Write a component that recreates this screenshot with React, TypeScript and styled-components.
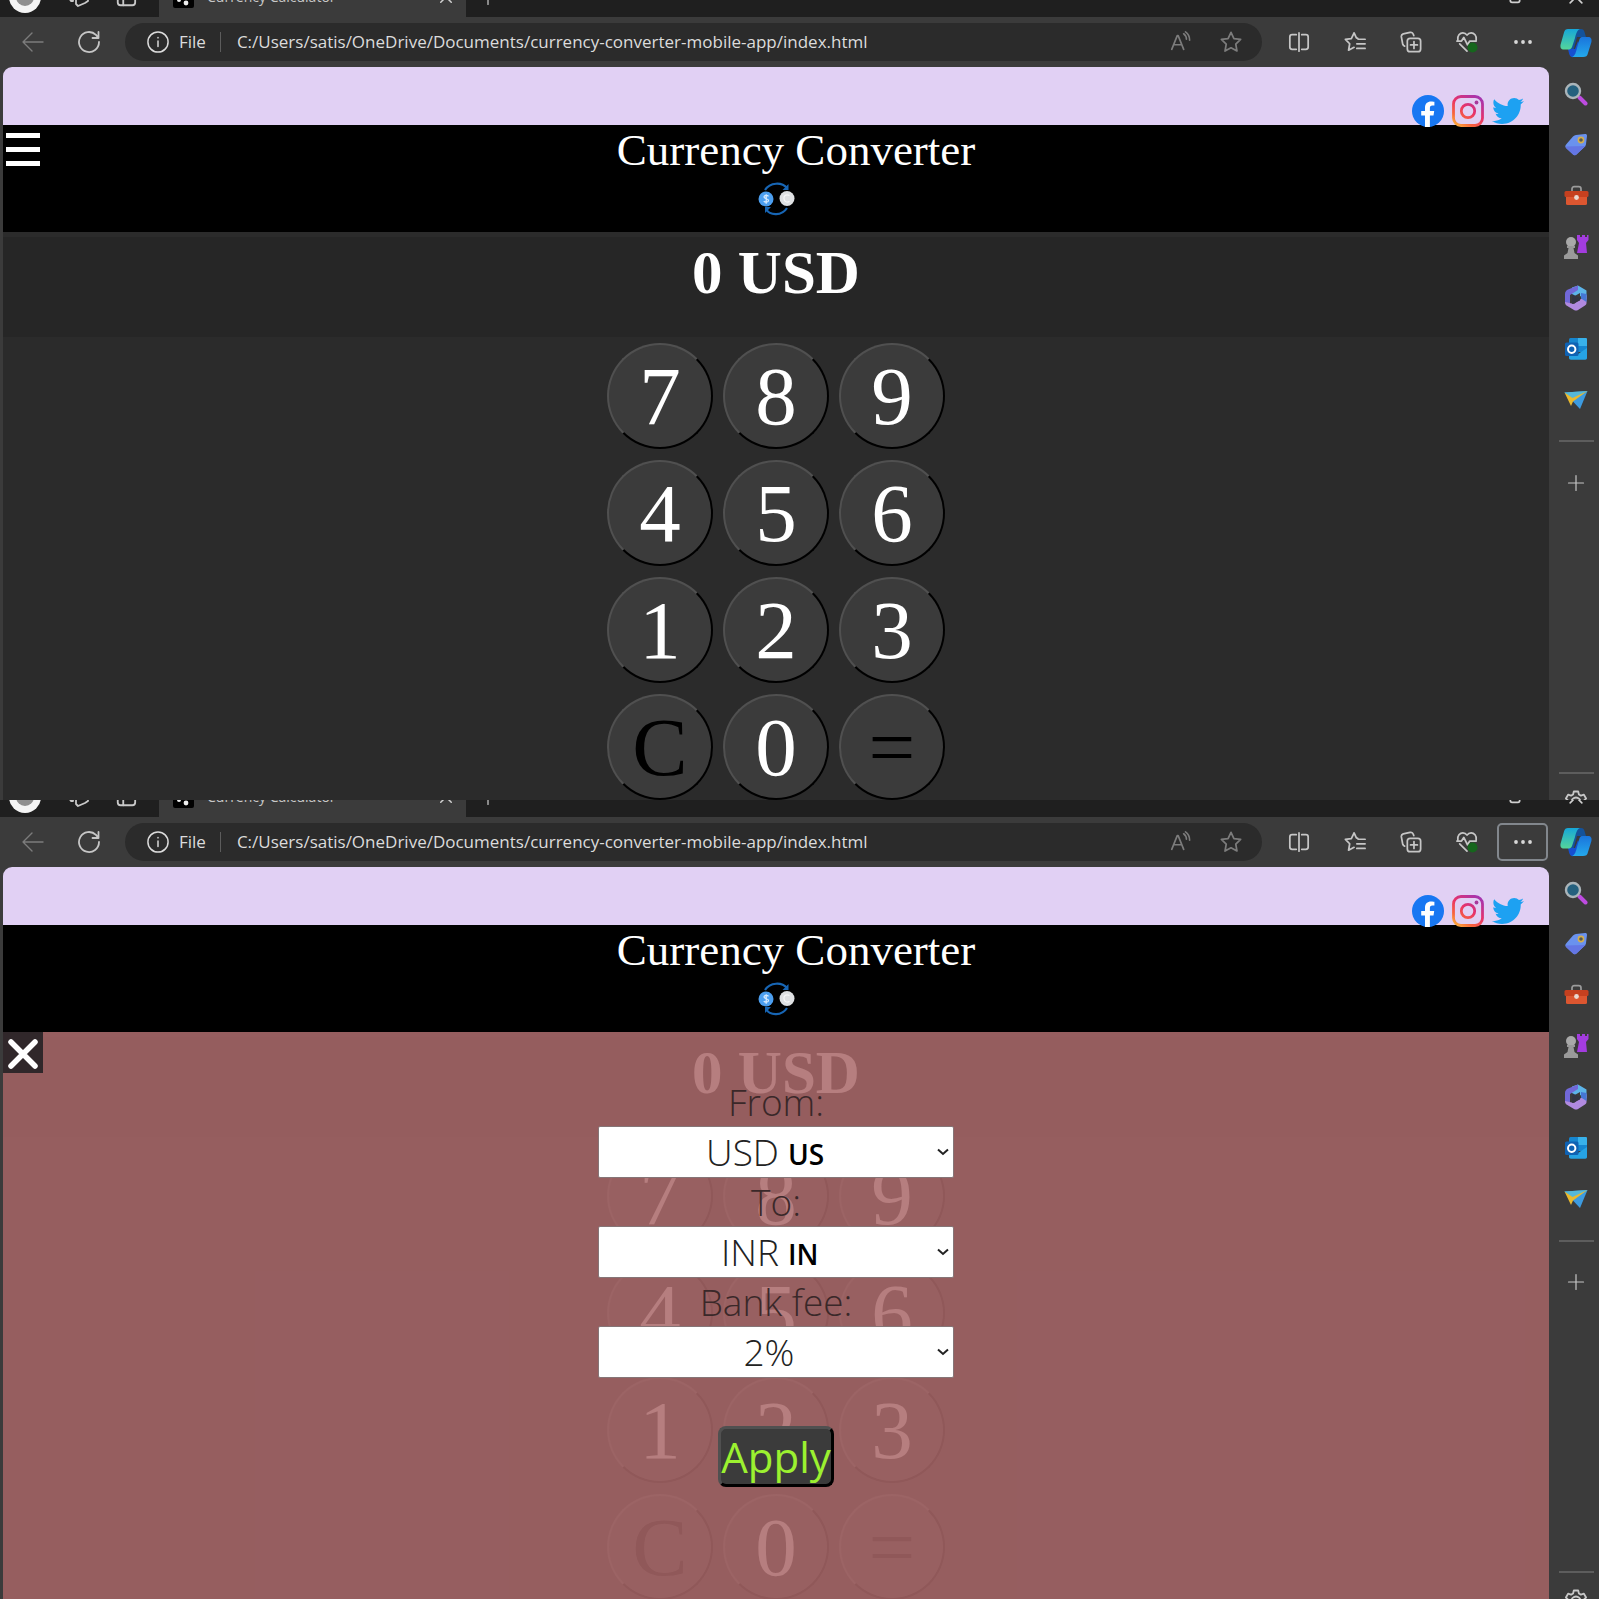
import React from "react";
import styled, { createGlobalStyle, css } from "styled-components";
import { FaTwitter } from "react-icons/fa";

const SERIF = '"Liberation Serif", "Times New Roman", serif';
const UI = '"Open Sans", "Noto Sans", sans-serif';

const GlobalStyle = createGlobalStyle`
  *, *::before, *::after { box-sizing: border-box; }
  body { margin: 0; background: #2b2b2b; font-family: ${UI}; }
  button, input, select { margin: 0; font: inherit; }
  button { padding: 0; border: 0; background: none; color: inherit; }
  svg { display: block; flex: none; }
`;

const Screens = styled.main`
  display: grid;
  grid-template-rows: 1fr 1fr;
  height: 100vh;
  overflow: hidden;
`;

const BrowserWindow = styled.section`
  display: flex;
  flex-direction: column;
  min-height: 0;
  overflow: hidden;
  background: #3b3b3b;
  color: #c8c8c8;
`;

const TabStrip = styled.div`
  display: flex;
  align-items: flex-end;
  height: 17px;
  flex: none;
  overflow: hidden;
  background: #1f1f1f;
`;

const StripGroup = styled.div`
  display: flex;
  align-items: center;
  height: 40px;
  width: 159px;
  padding-left: 9px;
  gap: 25px;
  border-bottom-right-radius: 6px;
  background: #1f1f1f;
`;

const Tab = styled.div`
  display: flex;
  align-items: center;
  height: 40px;
  width: 307px;
  padding: 0 11px 0 14px;
  gap: 13px;
  background: #3b3b3b;
`;

const TabTitle = styled.span`
  flex: 1;
  font-size: 14px;
  font-weight: 500;
  line-height: 20px;
  white-space: nowrap;
`;

const StripEnd = styled.div`
  display: flex;
  align-items: center;
  justify-content: space-between;
  flex: 1;
  height: 40px;
  padding: 0 13px;
`;

const WindowControls = styled.div`
  display: flex;
  align-items: center;
  gap: 44px;
`;

const StripButton = styled.button`
  display: flex;
  color: #d0d0d0;
`;

const WindowBody = styled.div`
  display: flex;
  flex: 1;
  min-height: 0;
`;

const MainColumn = styled.div`
  display: flex;
  flex-direction: column;
  flex: 1;
  min-width: 0;
  padding-left: 3px;
`;

const Toolbar = styled.div`
  display: flex;
  align-items: center;
  gap: 5px;
  height: 50px;
  flex: none;
  padding: 0 1px 0 4px;
`;

const ToolButton = styled.button<{ $dim?: boolean; $focused?: boolean }>`
  display: flex;
  align-items: center;
  justify-content: center;
  width: 51px;
  height: 38px;
  border: 2px solid ${(p) => (p.$focused ? "#82878d" : "transparent")};
  border-radius: 5px;
  color: ${(p) => (p.$dim ? "#7c7c7c" : "#c6c6c6")};
`;

const AddressBar = styled.div`
  display: flex;
  align-items: center;
  flex: 1;
  min-width: 0;
  height: 38px;
  margin: 0 6px;
  padding: 0 6px 0 22px;
  border-radius: 19px;
  background: #2b2b2b;
  font-size: 17px;
  line-height: 24px;
`;

const Scheme = styled.label`
  display: flex;
  align-items: center;
  gap: 10px;
  color: #dcdcdc;
`;

const Separator = styled.span`
  width: 1px;
  height: 20px;
  margin: 0 16px 0 14px;
  background: #5c5c5c;
`;

const Url = styled.input`
  flex: 1;
  min-width: 0;
  padding: 0;
  border: 0;
  outline: 0;
  background: transparent;
  color: #dcdcdc;
`;

const Sidebar = styled.aside`
  display: flex;
  flex-direction: column;
  align-items: center;
  width: 50px;
  flex: none;
  padding-left: 4px;
`;

const SideButton = styled.button`
  display: flex;
  align-items: center;
  justify-content: center;
  width: 44px;
  height: 51px;
  flex: none;
  color: #c6c6c6;
`;

const SideRule = styled.hr`
  width: 35px;
  height: 2px;
  margin: 15px 0;
  flex: none;
  border: 0;
  background: #5d5d5d;
`;

const SideBottom = styled.div`
  display: flex;
  flex-direction: column;
  align-items: center;
  height: 28px;
  margin-top: auto;
  overflow: hidden;
`;

const SideBottomRule = styled(SideRule)`
  margin: 0 0 16px;
`;

const Page = styled.div`
  position: relative;
  display: flex;
  flex-direction: column;
  flex: 1;
  min-height: 0;
  overflow: hidden;
  border-radius: 9px 9px 0 0;
  background: #2b2b2b;
  font-family: ${SERIF};
  color: #fff;
`;

const SocialBar = styled.div`
  position: relative;
  z-index: 1;
  display: flex;
  justify-content: flex-end;
  gap: 8px;
  height: 58px;
  flex: none;
  padding: 28px 25px 0 0;
  background: #e1d0f4;
`;

const SocialLink = styled.a`
  display: flex;
  width: 32px;
  height: 32px;
  color: #1da1f2;
`;

const Header = styled.header`
  display: flex;
  flex-direction: column;
  height: 107px;
  flex: none;
  background: #000;
`;

const TitleRow = styled.div`
  display: flex;
  height: 57px;
`;

const MenuButton = styled.button<{ $hidden: boolean }>`
  display: flex;
  flex-direction: column;
  justify-content: center;
  gap: 9px;
  width: 40px;
  height: 48px;
  padding: 0 3px;
  visibility: ${(p) => (p.$hidden ? "hidden" : "visible")};
`;

const MenuBar = styled.span`
  width: 34px;
  height: 5px;
  background: #fff;
`;

const Title = styled.h1`
  flex: 1;
  margin: 0;
  font-size: 45px;
  font-weight: 400;
  line-height: 50px;
  text-align: center;
`;

const HeaderIcon = styled.div`
  display: flex;
  justify-content: center;
`;

const Display = styled.output`
  display: block;
  height: 100px;
  flex: none;
  margin-top: 5px;
  background: #262626;
  font-size: 61px;
  font-weight: 700;
  line-height: 72px;
  text-align: center;
`;

const Keypad = styled.div`
  display: grid;
  grid-template-columns: repeat(3, 106px);
  grid-auto-rows: 106px;
  justify-content: center;
  gap: 11px 10px;
  padding-top: 6px;
`;

const raised = css<{ $edge?: number }>`
  border: ${(p) => p.$edge ?? 2}px solid;
  border-color: #505050 #000 #000 #505050;
  background: #3b3b3b;
`;

const Key = styled.button<{ $dark: boolean }>`
  ${raised}
  border-radius: 50%;
  color: ${(p) => (p.$dark ? "#000" : "#fff")};
  font-size: 83px;
  line-height: 100px;
`;

const Settings = styled.div`
  position: absolute;
  inset: 165px 0 0;
  z-index: 2;
  background: rgba(169, 103, 105, 0.85);
`;

const CloseButton = styled.button`
  position: absolute;
  top: 0;
  left: 0;
  display: flex;
  align-items: center;
  justify-content: center;
  width: 40px;
  height: 41px;
  padding-top: 4px;
  background: #30272a;
`;

const Form = styled.form`
  display: flex;
  flex-direction: column;
  align-items: center;
  padding-top: 46px;
  font-family: ${UI};
  font-size: 37px;
  font-weight: 300;
`;

const Label = styled.label`
  line-height: 48px;
  color: #3a2829;
`;

const Field = styled.div`
  position: relative;
  width: 356px;
  height: 52px;
`;

const Select = styled.select<{ $tagged: boolean }>`
  appearance: none;
  width: 100%;
  height: 100%;
  padding: 0 ${(p) => (p.$tagged ? 174 : 14)}px 0 0;
  border: 1px solid #857577;
  border-radius: 2px;
  background: #fff;
  color: #222;
  line-height: 50px;
  text-align-last: ${(p) => (p.$tagged ? "right" : "center")};
`;

const CountryTag = styled.span`
  position: absolute;
  top: 3px;
  left: 190px;
  color: #000;
  font-size: 28px;
  font-weight: 600;
  line-height: 50px;
  pointer-events: none;
`;

const Chevron = styled.svg`
  position: absolute;
  top: 22px;
  right: 5px;
  pointer-events: none;
`;

const Apply = styled.button<{ $edge: number }>`
  ${raised}
  height: 61px;
  margin-top: 48px;
  border-radius: 8px;
  color: #9cf130;
  font-size: 42px;
  font-weight: 400;
  line-height: 55px;
`;

type IconProps = { size?: number; children: React.ReactNode; width?: number };

const Line = ({ size = 24, width = 1.6, children }: IconProps) => (
  <svg width={size} height={size} viewBox="0 0 24 24" fill="none" stroke="currentColor"
    strokeWidth={width} strokeLinecap="round" strokeLinejoin="round" aria-hidden="true">
    {children}
  </svg>
);

const CrossIcon = ({ size = 24 }: { size?: number }) => (
  <Line size={size} width={2}><path d="M5 5l14 14M19 5L5 19" /></Line>
);

const Avatar = () => (
  <svg width="32" height="32" viewBox="0 0 32 32" aria-hidden="true">
    <circle cx="16" cy="16" r="16" fill="#f4f4f4" />
    <circle cx="16" cy="16" r="9" fill="#8f8f8f" />
  </svg>
);

const Favicon = () => (
  <svg width="21" height="22" viewBox="0 0 21 22" aria-hidden="true">
    <rect width="21" height="22" rx="2" fill="#000" />
    <circle cx="6" cy="14" r="2" fill="#eee" />
    <circle cx="13" cy="17" r="2.4" fill="#eee" />
    <circle cx="12" cy="7" r="2" fill="#eee" />
  </svg>
);

const FacebookIcon = () => (
  <svg width="32" height="32" viewBox="0 0 32 32" aria-hidden="true">
    <circle cx="16" cy="16" r="16" fill="#1877f2" />
    <path d="M13 32V20.6H9.2V16H13v-3.400c0-4 2.400-6.200 6-6.200 1.700 0 3.400.3 3.400.3v3.900h-2c-1.900 0-2.500 1.200-2.500 2.400V16h4.300l-.7 4.600h-3.600V32z" fill="#fff" />
  </svg>
);

const InstagramIcon = ({ id }: { id: string }) => (
  <svg width="32" height="32" viewBox="0 0 32 32" fill="none" aria-hidden="true">
    <defs>
      <linearGradient id={id} x1="4" y1="32" x2="26" y2="0" gradientUnits="userSpaceOnUse">
        <stop offset="0" stopColor="#fdb83c" />
        <stop offset="0.25" stopColor="#f8653c" />
        <stop offset="0.55" stopColor="#e93368" />
        <stop offset="1" stopColor="#a034b4" />
      </linearGradient>
    </defs>
    <g stroke={`url(#${id})`} strokeWidth="2.800">
      <rect x="1.500" y="1.500" width="29" height="29" rx="7.500" />
      <circle cx="16" cy="16" r="6.700" />
    </g>
    <circle cx="24.500" cy="7.500" r="1.900" fill="#a83a9c" />
  </svg>
);

const ExchangeIcon = () => (
  <svg width="37" height="34" viewBox="0 0 37 34" fill="none" aria-hidden="true">
    <path d="M7 8C12 0 24 0 29 6M29 26C24 34 12 34 8 27" stroke="#1765b4" strokeWidth="2.200" />
    <path d="M30.500 2v6h-6zM7 31v-6h6z" fill="#1765b4" />
    <circle cx="8" cy="17" r="7.500" fill="#4c9ff0" />
    <path d="M10.500 14.300c-1-1.300-4.500-1.300-4.500.7 0 2 4.500 1.500 4.500 3.500s-3.800 2-4.700.6M8.200 12.200v9.600" stroke="#d7ebff" strokeWidth="1.300" />
    <circle cx="29" cy="16.500" r="7.500" fill="#dfe1e3" />
    <path d="M31.500 13.500c-4-2-6 1-5.500 3.500.4 2.500 3 4 5.500 2.300" stroke="#f7f7f7" strokeWidth="1.300" />
  </svg>
);

const CopilotIcon = ({ id }: { id: string }) => (
  <svg width="32" height="30" viewBox="0 0 32 30" aria-hidden="true">
    <defs>
      <linearGradient id={`${id}a`} x1="0" y1="0" x2="0" y2="1">
        <stop offset="0" stopColor="#16a6d8" /><stop offset="1" stopColor="#55d69a" />
      </linearGradient>
      <linearGradient id={`${id}b`} x1="0" y1="0" x2="0" y2="1">
        <stop offset="0" stopColor="#1a74dc" /><stop offset="1" stopColor="#24a9ec" />
      </linearGradient>
    </defs>
    <path d="M17 1h4c2 0 3 1 3.500 3l1.500 5h-9l-4 15-3-2z" fill="#14529a" />
    <path d="M8 21h7l3-8 2 4-6 12c-3 .5-4-.5-4.800-3z" fill="#164fd0" />
    <path d="M8 1h12c-3 1-4 5-5 9l-3 9c-.8 2-2 2.500-4 2.500H4c-3 0-4-2-3.400-5L4 4.500C4.600 2 6 1 8 1z" fill={`url(#${id}a)`} />
    <path d="M22 9h6c3 0 4 2 3.400 5L28 25c-.7 3-2 4-5 4H12c3-1 4-5 5-9l2-7c.8-3 1.500-4 3-4z" fill={`url(#${id}b)`} />
  </svg>
);

const SearchIcon = () => (
  <svg width="24" height="24" viewBox="0 0 24 24" aria-hidden="true">
    <path d="M15.500 15.500l6 6" stroke="#bd4be0" strokeWidth="4" strokeLinecap="round" />
    <circle cx="9" cy="9" r="7" fill="#24607e" stroke="#aab4b9" strokeWidth="2.400" />
  </svg>
);

const TagIcon = () => (
  <svg width="24" height="24" viewBox="0 0 24 24" aria-hidden="true">
    <path d="M12 2l9-1c1.500 0 2 .6 2 2l-1 8c0 1-.6 2-1.300 2.700L13 21c-1.500 1.600-3 1.600-4.500 0l-6-5.500c-1.600-1.500-1.600-3 0-4.500L9 3.500C10 2.500 11 2 12 2z" fill="#6a92ee" />
    <path d="M1.500 13.500L21.500 13c-.2.300-.5.500-.8.700L13 21c-1.500 1.600-3 1.600-4.500 0l-6-5.500z" fill="#6476e4" />
    <circle cx="17" cy="7" r="2.600" fill="#555a55" stroke="#d5ae4c" strokeWidth="1.600" />
  </svg>
);

const ToolboxIcon = () => (
  <svg width="25" height="22" viewBox="0 0 25 22" aria-hidden="true">
    <path d="M8 7V4c0-1.500.8-2.300 2.300-2.300h4.400C16.200 1.700 17 2.500 17 4v3" fill="none" stroke="#9c9c9c" strokeWidth="1.700" />
    <rect x="2" y="10" width="21" height="10" rx="1.500" fill="#dc5630" />
    <rect x="0.500" y="6" width="24" height="6" rx="1.500" fill="#c6401f" />
    <circle cx="12.500" cy="12.500" r="2.400" fill="#e9d9d2" />
  </svg>
);

const ChessIcon = () => (
  <svg width="26" height="26" viewBox="0 0 26 26" aria-hidden="true">
    <path d="M14 1h3v2h2V1h3v2h2V1h1.500v5l-2.500 3 1 10H14l2-10-2-3z" fill="#a33cdf" />
    <circle cx="8" cy="8" r="5" fill="#a9a9a9" />
    <path d="M4 12h8v2h-1.500l1 5 3.500 2.500V25H1v-3.500L4.500 19l1-5H4z" fill="#9a9a9a" />
  </svg>
);

const OfficeIcon = () => (
  <svg width="24" height="26" viewBox="0 0 24 26" aria-hidden="true">
    <path d="M8 2.500l6-2 8.500 5v9L16 11V8L8 12.500z" fill="#5cb4e8" />
    <path d="M14 .5L4 4.500C2 5.500 1 7 1 9v9l5 2.500V10l8-5z" fill="#7168d8" />
    <path d="M1 17l9 2 12.500-9v8c0 1-.6 2-1.500 2.500L14 25c-1.300.7-2.600.7-4 0L2.500 20.500C1.500 20 1 18 1 17z" fill="#b18adf" />
    <path d="M22.500 9v8L17 13.500V8z" fill="#4576d4" />
    <path d="M8 9l8 4v2.500L8 19z" fill="#333542" />
  </svg>
);

const OutlookIcon = () => (
  <svg width="24" height="24" viewBox="0 0 24 24" aria-hidden="true">
    <rect x="5" y="1" width="18" height="14" rx="1.500" fill="#1686cf" />
    <path d="M14 1h7.500c1 0 1.500.5 1.500 1.500V9h-9z" fill="#38b1ea" />
    <path d="M5 12l9 5 9-6v10c0 1-.7 1.700-1.700 1.700H7c-1.200 0-2-.7-2-1.700z" fill="#26a3e4" />
    <rect x="1" y="5.500" width="13.500" height="13.500" rx="1.500" fill="#0f62b3" />
    <circle cx="7.700" cy="12.200" r="3.700" fill="none" stroke="#fff" strokeWidth="2" />
  </svg>
);

const PlaneIcon = () => (
  <svg width="24" height="20" viewBox="0 0 24 20" aria-hidden="true">
    <path d="M.5 2.500L23.500 1 16 19z" fill="#3d9be0" />
    <path d="M.5 2.500L23.500 1 8 9.500z" fill="#55b8d8" />
    <path d="M.5 2.500l8 5.500L23.500 1 9 11.500 7 16z" fill="#eab92d" />
  </svg>
);

const GearIcon = () => (
  <svg width="24" height="24" viewBox="0 0 24 24" fill="none" stroke="currentColor" strokeWidth="1.800" strokeLinejoin="round" aria-hidden="true">
    <path d="M9.800 1.500h4.400l.7 3 2 1.100 3-.9 2.200 3.800-2.200 2.100v2.600l2.200 2.100-2.200 3.800-3-.9-2 1.100-.7 3H9.800l-.7-3-2-1.100-3 .9-2.200-3.800 2.200-2.100v-2.600L1.900 8.500l2.200-3.800 3 .9 2-1.100z" />
    <circle cx="12" cy="12" r="4.500" />
  </svg>
);

const sideTools: [string, React.ReactNode][] = [
  ["Search", <SearchIcon />],
  ["Shopping", <TagIcon />],
  ["Tools", <ToolboxIcon />],
  ["Games", <ChessIcon />],
  ["Microsoft 365", <OfficeIcon />],
  ["Outlook", <OutlookIcon />],
  ["Drop", <PlaneIcon />],
];

const keys = ["7", "8", "9", "4", "5", "6", "1", "2", "3", "C", "0", "="];

type FieldSpec = { name: string; label: string; options: string[]; tag?: string };

const fields: FieldSpec[] = [
  { name: "from", label: "From:", options: ["USD"], tag: "US" },
  { name: "to", label: "To:", options: ["INR"], tag: "IN" },
  { name: "fee", label: "Bank fee:", options: ["2%"] },
];

function SettingsPanel() {
  return (
    <Settings>
      <CloseButton aria-label="Close settings">
        <svg width="30" height="30" viewBox="0 0 30 30" stroke="#fff" strokeWidth="5.500" aria-hidden="true">
          <path d="M3 3l24 24M27 3L3 27" strokeLinecap="round" />
        </svg>
      </CloseButton>
      <Form onSubmit={(e) => e.preventDefault()}>
        {fields.map((f) => (
          <React.Fragment key={f.name}>
            <Label htmlFor={f.name}>{f.label}</Label>
            <Field>
              <Select id={f.name} $tagged={Boolean(f.tag)}>
                {f.options.map((o) => <option key={o}>{o}</option>)}
              </Select>
              {f.tag && <CountryTag>{f.tag}</CountryTag>}
              <Chevron width="12" height="8" viewBox="0 0 12 8" fill="none" stroke="#222" strokeWidth="2" aria-hidden="true">
                <path d="M1 1.500l5 4.500 5-4.500" />
              </Chevron>
            </Field>
          </React.Fragment>
        ))}
        <Apply type="submit" $edge={3}>Apply</Apply>
      </Form>
    </Settings>
  );
}

function Browser({ id, settingsOpen }: { id: string; settingsOpen: boolean }) {
  return (
    <BrowserWindow>
      <TabStrip>
        <StripGroup>
          <Avatar />
          <Line size={24} width={1.8}><path d="M3 6h4v10H5l-2-3zM10 5l8-2 4 3v10l-3 2-7 3-2-2z" /></Line>
          <Line size={22} width={2}><rect x="3" y="2" width="19" height="19" rx="3" /><path d="M9 8v13M3 8h19" /></Line>
        </StripGroup>
        <Tab>
          <Favicon />
          <TabTitle>Currency Calculator</TabTitle>
          <StripButton aria-label="Close tab"><CrossIcon size={18} /></StripButton>
        </Tab>
        <StripEnd>
          <StripButton aria-label="New tab"><Line size={18}><path d="M12 2v20M2 12h20" /></Line></StripButton>
          <WindowControls>
            <StripButton aria-label="Maximize"><Line size={14} width={3}><rect x="4" y="3" width="16" height="18" rx="3" /></Line></StripButton>
            <StripButton aria-label="Close window"><CrossIcon size={20} /></StripButton>
          </WindowControls>
        </StripEnd>
      </TabStrip>

      <WindowBody>
        <MainColumn>
          <Toolbar>
            <ToolButton $dim aria-label="Back"><Line width={1.4}><path d="M22 12H2M11 3L2 12l9 9" /></Line></ToolButton>
            <ToolButton aria-label="Refresh"><Line width={1.8}><path d="M22 12a10 10 0 1 1-3-7.100L21.500 8M21.500 2v6h-6" /></Line></ToolButton>
            <AddressBar>
              <Scheme htmlFor={`${id}-url`}>
                <Line size={22}><circle cx="12" cy="12" r="11" /><path d="M12 11v6M12 7v.5" /></Line>
                File
              </Scheme>
              <Separator />
              <Url id={`${id}-url`} readOnly value="C:/Users/satis/OneDrive/Documents/currency-converter-mobile-app/index.html" />
              <ToolButton $dim aria-label="Read aloud">
                <Line size={22} width={1.8}><path d="M3 20l6-15h1l6 15M5 15h9M16 3c2 1.500 3 3.500 3 6M18 1c3 2 4.500 5 4.500 9" /></Line>
              </ToolButton>
              <ToolButton $dim aria-label="Add to favourites">
                <Line size={22} width={1.9}><path d="M12 1.500l3.200 6.700 7.300 1-5.300 5.200 1.300 7.400L12 18.300l-6.500 3.500 1.300-7.400L1.500 9.200l7.300-1z" /></Line>
              </ToolButton>
            </AddressBar>
            <ToolButton aria-label="Split screen">
              <Line size={22} width={1.9}><path d="M9 4H4.500A2.500 2.500 0 0 0 2 6.500v11A2.500 2.500 0 0 0 4.500 20H9M15 4h4.500A2.500 2.500 0 0 1 22 6.500v11a2.500 2.500 0 0 1-2.500 2.500H15M12 2v20" /></Line>
            </ToolButton>
            <ToolButton aria-label="Favourites">
              <Line size={22} width={1.9}><path d="M15 8l-1.500-.5L11 2 8 8.200l-6.500 1 4.700 4.700L5 21l6-3.200M15.500 9H23M14 14h9M14 19h9" /></Line>
            </ToolButton>
            <ToolButton aria-label="Collections">
              <Line size={22} width={1.9}><rect x="8" y="8" width="14.500" height="14.500" rx="3" /><path d="M15.250 11.500v7.500M11.500 15.250h7.500M5 16.500a3 3 0 0 1-2-2L1.500 6.500a3 3 0 0 1 2-3.300L11 1.500a3 3 0 0 1 3.500 2L15 5" /></Line>
            </ToolButton>
            <ToolButton aria-label="Browser essentials">
              <Line size={22} width={1.9}>
                <path d="M2 10c-1-5 2.500-8 5.500-8C10 2 11 3 12 4.500 13 3 14 2 16.500 2c3 0 6.500 3 5.500 8M1 11h5l2.500-4 4 8 2.500-4h7M4 14l8 8" />
                <circle cx="18" cy="18" r="5.500" fill="#16661d" stroke="none" />
              </Line>
            </ToolButton>
            <ToolButton $focused={settingsOpen} aria-label="More">
              <svg width="20" height="6" viewBox="0 0 20 6" fill="#d8d8d8" aria-hidden="true">
                <circle cx="3" cy="3" r="1.900" /><circle cx="10" cy="3" r="1.900" /><circle cx="17" cy="3" r="1.900" />
              </svg>
            </ToolButton>
          </Toolbar>

          <Page>
            <SocialBar>
              <SocialLink href="#facebook" aria-label="Facebook"><FacebookIcon /></SocialLink>
              <SocialLink href="#instagram" aria-label="Instagram"><InstagramIcon id={`${id}-ig`} /></SocialLink>
              <SocialLink href="#twitter" aria-label="Twitter"><FaTwitter size={32} /></SocialLink>
            </SocialBar>
            <Header>
              <TitleRow>
                <MenuButton $hidden={settingsOpen} aria-label="Menu"><MenuBar /><MenuBar /><MenuBar /></MenuButton>
                <Title>Currency Converter</Title>
              </TitleRow>
              <HeaderIcon><ExchangeIcon /></HeaderIcon>
            </Header>
            <Display>0 USD</Display>
            <Keypad>
              {keys.map((k) => <Key key={k} $dark={k === "C" || k === "="}>{k}</Key>)}
            </Keypad>
            {settingsOpen && <SettingsPanel />}
          </Page>
        </MainColumn>

        <Sidebar>
          <SideButton aria-label="Copilot"><CopilotIcon id={`${id}-co`} /></SideButton>
          {sideTools.map(([name, icon]) => <SideButton key={name} aria-label={name}>{icon}</SideButton>)}
          <SideRule />
          <SideButton aria-label="Customize"><Line size={18}><path d="M12 2v20M2 12h20" /></Line></SideButton>
          <SideBottom>
            <SideBottomRule />
            <GearIcon />
          </SideBottom>
        </Sidebar>
      </WindowBody>
    </BrowserWindow>
  );
}

export default function App() {
  return (
    <>
      <GlobalStyle />
      <Screens>
        <Browser id="keypad" settingsOpen={false} />
        <Browser id="settings" settingsOpen />
      </Screens>
    </>
  );
}
